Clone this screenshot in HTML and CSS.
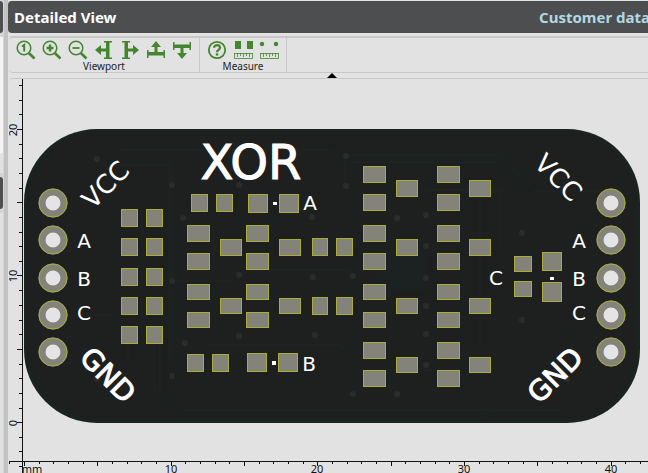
FILE: index.html
```html
<!DOCTYPE html>
<html lang="en">
<head>
<meta charset="utf-8">
<title>Detailed View</title>
<link rel="stylesheet" href="styles.css">
</head>
<body>
<div class="app">
  <aside class="side">
    <div class="side-head"></div>
    <div class="side-body"></div>
    <div class="side-head"></div>
    <div class="side-rest"></div>
  </aside>
  <main class="main">
    <header class="title-bar">
      <h1 class="title">Detailed View</h1>
      <a class="customer" href="#">Customer data</a>
    </header>
    <div class="toolbar">
      <section class="group">
        <div class="buttons">
          <button class="tool" aria-label="Zoom to fit"><svg viewBox="0 0 20 20"><g fill="none" stroke="currentColor"><circle cx="8" cy="8" r="6.800" stroke-width="1.500"/><path d="M12.800 13l5.700 5.500" stroke-width="2.600"/><path d="M6 6.500l2.200-1.500v6.500" stroke-width="2"/></g></svg></button>
          <button class="tool" aria-label="Zoom in"><svg viewBox="0 0 20 20"><g fill="none" stroke="currentColor"><circle cx="8" cy="8" r="6.800" stroke-width="1.500"/><path d="M12.800 13l5.700 5.500" stroke-width="2.600"/><path d="M4.500 8h7M8 4.500v7" stroke-width="2.400"/></g></svg></button>
          <button class="tool" aria-label="Zoom out"><svg viewBox="0 0 20 20"><g fill="none" stroke="currentColor"><circle cx="8" cy="8" r="6.800" stroke-width="1.500"/><path d="M12.800 13l5.700 5.500" stroke-width="2.600"/><path d="M4.500 8h7" stroke-width="1.800"/></g></svg></button>
          <button class="tool" aria-label="Pan left"><svg viewBox="0 0 20 20"><path id="pan" fill="currentColor" d="M1 10l6-5v3.500h5V2.500H10V1h8v1.500h-2.500v15H18V19h-8v-1.500h2v-6H7V15z"/></svg></button>
          <button class="tool" aria-label="Pan right"><svg viewBox="0 0 20 20"><use href="#pan" transform="rotate(180 10 10)"/></svg></button>
          <button class="tool" aria-label="Pan up"><svg viewBox="0 0 20 20"><use href="#pan" transform="rotate(90 10 10)"/></svg></button>
          <button class="tool" aria-label="Pan down"><svg viewBox="0 0 20 20"><use href="#pan" transform="rotate(-90 10 10)"/></svg></button>
        </div>
        <span class="label">Viewport</span>
      </section>
      <section class="group">
        <div class="buttons">
          <button class="tool" aria-label="Measure help"><svg viewBox="0 0 20 20"><g fill="none" stroke="currentColor"><circle cx="10" cy="10" r="8.200" stroke-width="1.800"/><path d="M7 7.800c0-3.600 6-3.600 6 0 0 2-3 2.200-3 4.400" stroke-width="2.200"/><path d="M10 13.400v2.200" stroke-width="2.400"/></g></svg></button>
          <button class="tool" aria-label="Pad distance"><svg viewBox="0 0 20 20"><path fill="currentColor" d="M2 1h6v8H2zM14 1h6v8h-6z"/><path id="scale" fill="none" stroke="currentColor" d="M1 13.500h18.500M4.500 13v4M7.500 13v3M10.500 13v4M13.500 13v3M16.500 13v4M1.500 13v5.500h18V13" stroke-width=".8"/></svg></button>
          <button class="tool" aria-label="Point distance"><svg viewBox="0 0 20 20"><g fill="currentColor"><circle cx="3" cy="4" r="2.200"/><circle cx="17" cy="4" r="2.200"/></g><use href="#scale"/></svg></button>
        </div>
        <span class="label">Measure</span>
      </section>
    </div>
    <div class="collapse"><button class="collapse-button" aria-label="Collapse toolbar"></button></div>
    <div class="viewer">
      <svg class="canvas" viewBox="9 79 639 394">
        <rect class="edge" x="24" y="129" width="616" height="294" rx="73"/>
        <rect class="board" x="28" y="133" width="608" height="286" rx="69"/>
        <g class="traces">
          <path d="M120 150H330L345 156M350 155H500L535 191H600M350 162H495L532 198M170 281H230L250 270H350M330 240H425M380 265H426M140 310L160 330V390L180 410H560M154 342V392L175 413M70 315H110L128 332V365M480 420L590 310M205 345H340L360 370H460M426 190H500V250M480 197V350M110 165H170V360M345 156V185"/>
          <path class="pour" d="M376 250h50v40h-50z"/>
        </g>
        <g class="vias">
          <circle cx="97" cy="159" r="3"/><circle cx="97" cy="379" r="3"/><circle cx="172" cy="185" r="3"/><circle cx="172" cy="281" r="3"/><circle cx="172" cy="376" r="3"/><circle cx="183" cy="218" r="3"/><circle cx="185" cy="343" r="3"/><circle cx="239" cy="185" r="3"/><circle cx="239" cy="275" r="3"/><circle cx="239" cy="336" r="3"/><circle cx="312" cy="217" r="3"/><circle cx="313" cy="277" r="3"/><circle cx="315" cy="335" r="3"/><circle cx="346" cy="156" r="3"/><circle cx="346" cy="186" r="3"/><circle cx="353" cy="276" r="3"/><circle cx="353" cy="394" r="3"/><circle cx="397" cy="394" r="3"/><circle cx="397" cy="218" r="3"/><circle cx="426" cy="215" r="3"/><circle cx="426" cy="246" r="3"/><circle cx="426" cy="278" r="3"/><circle cx="426" cy="306" r="3"/><circle cx="426" cy="334" r="3"/><circle cx="426" cy="365" r="3"/><circle cx="522" cy="233" r="3"/><circle cx="522" cy="320" r="3"/><circle cx="567" cy="379" r="3"/>
        </g>
        <g class="holes">
          <circle cx="53" cy="203" r="11"/><circle cx="53" cy="240" r="11"/><circle cx="53" cy="278" r="11"/><circle cx="53" cy="315" r="11"/><circle cx="53" cy="352" r="11"/>
          <circle cx="611" cy="203" r="11"/><circle cx="611" cy="240" r="11"/><circle cx="611" cy="278" r="11"/><circle cx="611" cy="315" r="11"/><circle cx="611" cy="352" r="11"/>
        </g>
        <g class="rings">
          <circle cx="53" cy="203" r="14"/><circle cx="53" cy="240" r="14"/><circle cx="53" cy="278" r="14"/><circle cx="53" cy="315" r="14"/><circle cx="53" cy="352" r="14"/>
          <circle cx="611" cy="203" r="14"/><circle cx="611" cy="240" r="14"/><circle cx="611" cy="278" r="14"/><circle cx="611" cy="315" r="14"/><circle cx="611" cy="352" r="14"/>
        </g>
        <g class="pads">
          <!-- upright pads -->
          <path d="M121 209h16v17h-16zM146 209h16v17h-16zM121 238h16v17h-16zM146 238h16v17h-16zM121 268h16v17h-16zM146 268h16v17h-16zM121 297h16v17h-16zM146 297h16v17h-16zM121 326h16v17h-16zM146 326h16v17h-16zM191 194h16v17h-16zM216 194h16v17h-16zM187 354h16v17h-16zM212 354h16v17h-16zM312 238h15v17h-15zM336 238h16v17h-16zM312 297h15v17h-15zM336 297h16v17h-16z"/>
          <!-- large pads -->
          <path d="M248 194h19v18h-19zM279 194h19v18h-19zM247 353h19v18h-19zM278 353h19v18h-19zM542 252h19v18h-19zM542 282h19v19h-19zM514 256h17v15h-17zM514 281h17v15h-17z"/>
          <!-- transistor pads -->
          <path d="M187 225h22v16h-22zM187 253h22v16h-22zM187 284h22v15h-22zM187 312h22v15h-22zM246 225h22v16h-22zM246 253h22v16h-22zM246 284h22v15h-22zM246 312h22v15h-22zM220 239h21v16h-21zM220 298h21v15h-21zM279 239h21v16h-21zM279 298h21v15h-21z"/>
          <path d="M363 166h22v16h-22zM363 194h22v16h-22zM363 225h22v16h-22zM363 253h22v16h-22zM363 284h22v15h-22zM363 312h22v15h-22zM363 342h22v16h-22zM363 370h22v16h-22zM437 166h22v16h-22zM437 194h22v16h-22zM437 225h22v16h-22zM437 253h22v16h-22zM437 284h22v15h-22zM437 312h22v15h-22zM437 342h22v16h-22zM437 370h22v16h-22z"/>
          <path d="M396 180h21v16h-21zM396 239h21v16h-21zM396 298h21v15h-21zM396 357h21v15h-21zM469 180h21v16h-21zM469 239h21v16h-21zM469 298h21v15h-21zM469 357h21v15h-21z"/>
        </g>
        <path class="dots" d="M273 202h4v3h-4zM272 361h4v4h-4zM550 277h4v3h-4z"/>
        <g class="silk">
          <text class="silk-name" x="251" y="179">XOR</text>
          <g class="silk-net">
            <text transform="translate(112 191) rotate(-45)">VCC</text>
            <text transform="translate(552 184) rotate(45)">VCC</text>
          </g>
          <g class="silk-ground">
            <text transform="translate(101 382) rotate(45)">GND</text>
            <text transform="translate(562 382) rotate(-45)">GND</text>
          </g>
          <g class="silk-pin">
            <text x="84" y="248">A</text><text x="84" y="286">B</text><text x="84" y="320">C</text>
            <text x="579" y="248">A</text><text x="579" y="286">B</text><text x="579" y="320">C</text>
            <text x="310" y="210">A</text><text x="309" y="371">B</text><text x="496" y="285">C</text>
          </g>
        </g>
        <g class="ruler">
          <path d="M22 79h1v394h-1zM9 461h639v1H9z"/>
          <path d="M19 85h3v1h-3zM19 100h3v1h-3zM19 114h3v1h-3zM17 129h5v1h-5zM19 144h3v1h-3zM19 158h3v1h-3zM19 173h3v1h-3zM19 188h3v1h-3zM17 202h5v1h-5zM19 217h3v1h-3zM19 232h3v1h-3zM19 246h3v1h-3zM19 261h3v1h-3zM17 275h5v1h-5zM19 290h3v1h-3zM19 305h3v1h-3zM19 320h3v1h-3zM19 334h3v1h-3zM17 349h5v1h-5zM19 364h3v1h-3zM19 378h3v1h-3zM19 393h3v1h-3zM19 408h3v1h-3zM17 422h5v1h-5zM19 437h3v1h-3zM19 451h3v1h-3zM19 466h3v1h-3z"/>
          <path d="M9 462h1v2h-1zM24 462h1v4h-1zM39 462h1v2h-1zM53 462h1v2h-1zM68 462h1v2h-1zM83 462h1v2h-1zM97 462h1v4h-1zM112 462h1v2h-1zM127 462h1v2h-1zM141 462h1v2h-1zM156 462h1v2h-1zM171 462h1v4h-1zM185 462h1v2h-1zM200 462h1v2h-1zM215 462h1v2h-1zM229 462h1v2h-1zM244 462h1v4h-1zM259 462h1v2h-1zM273 462h1v2h-1zM288 462h1v2h-1zM303 462h1v2h-1zM317 462h1v4h-1zM332 462h1v2h-1zM347 462h1v2h-1zM361 462h1v2h-1zM376 462h1v2h-1zM391 462h1v4h-1zM405 462h1v2h-1zM420 462h1v2h-1zM435 462h1v2h-1zM449 462h1v2h-1zM464 462h1v4h-1zM479 462h1v2h-1zM493 462h1v2h-1zM508 462h1v2h-1zM523 462h1v2h-1zM537 462h1v4h-1zM552 462h1v2h-1zM567 462h1v2h-1zM581 462h1v2h-1zM596 462h1v2h-1zM611 462h1v4h-1zM625 462h1v2h-1zM640 462h1v2h-1z"/>
          <text x="32" y="473">mm</text><text x="171" y="473">10</text><text x="317" y="473">20</text><text x="464" y="473">30</text><text x="611" y="473">40</text>
          <text transform="translate(17 130) rotate(-90)">20</text><text transform="translate(17 276) rotate(-90)">10</text><text transform="translate(17 423) rotate(-90)">0</text>
        </g>
      </svg>
    </div>
  </main>
</div>
</body>
</html>
```
FILE: styles.css
```css
* { box-sizing: border-box; }

body {
  margin: 0;
  background: #e2e2e2;
  font-family: "Noto Sans", "Open Sans", sans-serif;
  color: #222;
}

.app {
  display: grid;
  grid-template-columns: 8px minmax(0, 1fr);
  height: 100vh;
  overflow: hidden;
}

.side {
  display: flex;
  flex-direction: column;
  padding-top: 1px;
  border-right: 4px solid #c2c2c2;
  background: #d4d4d4;
}

.side-head {
  height: 32px;
  margin-right: 1px;
  border-radius: 0 4px 4px 0;
  background: #4d4e50;
}

.side-body {
  height: 136px;
  margin: 4px 1px 4px 0;
  background: linear-gradient(#f4f4f4 85%, #e2e2e2 85%);
}

.side-rest {
  flex: 1;
  margin: 4px 1px 0 0;
  background: #e2e2e2;
}

.main {
  display: flex;
  flex-direction: column;
  padding-top: 1px;
  background: #e2e2e2;
}

.title-bar {
  display: flex;
  flex: none;
  align-items: center;
  height: 32px;
  padding-left: 6px;
  border-radius: 4px 0 0 4px;
  background: #4d4e50;
  font-size: 15px;
  font-weight: 700;
  white-space: nowrap;
}

.title {
  flex: 1;
  margin: 0;
  color: #fff;
  font-size: inherit;
}

.customer {
  margin-right: -2px;
  color: #b0d8e2;
  text-decoration: none;
}

.toolbar {
  display: flex;
  flex: none;
  height: 37px;
  margin: 3px 0 0 1px;
  border-top: 2px solid #c8c8c8;
  border-bottom: 1px solid #c8c8c8;
  border-radius: 4px 0 0 4px;
}

.group {
  display: flex;
  flex-direction: column;
  align-items: center;
  padding: 2px 4px 0;
  border-right: 1px solid #c8c8c8;
}

.buttons { display: flex; }

.tool {
  display: flex;
  justify-content: center;
  width: 26px;
  height: 20px;
  padding: 0;
  border: 0;
  background: none;
  color: #43862f;
}

.tool svg {
  width: 20px;
  height: 20px;
}

.label {
  font-size: 10px;
  line-height: 13px;
}

.collapse {
  display: flex;
  flex: none;
  justify-content: center;
  height: 5px;
  padding-left: 8px;
}

.collapse-button {
  width: 10px;
  height: 5px;
  padding: 0;
  border: 0;
  background: #000;
  clip-path: polygon(50% 0, 100% 100%, 0 100%);
}

.viewer {
  margin-left: 1px;
  border-top: 1px solid #c8c8c8;
  border-radius: 4px 0 0 0;
}

.canvas {
  display: block;
  width: 100%;
}

.edge { fill: #1b2320; }
.board { fill: #1e1f1f; }
.traces { fill: none; stroke: #1d2322; stroke-width: 2; }
.pour { fill: #1c2221; stroke: none; }
.vias { fill: #2b2d2d; }

.holes { fill: #e4e4e4; stroke: #83837a; stroke-width: 7; }
.rings { fill: none; stroke: #a9ad38; }

.pads {
  fill: #83837a;
  stroke: #a9ad38;
  shape-rendering: crispEdges;
}

.dots { fill: #fff; }

.silk {
  fill: #fff;
  font-family: "DejaVu Sans", sans-serif;
  text-anchor: middle;
}

.silk-name { font-size: 48px; stroke: #fff; }
.silk-net { font-size: 26px; }
.silk-ground { font-size: 28px; stroke: #fff; }
.silk-pin { font-size: 20px; }

.ruler {
  fill: #111;
  font-size: 11px;
  text-anchor: middle;
}
```
